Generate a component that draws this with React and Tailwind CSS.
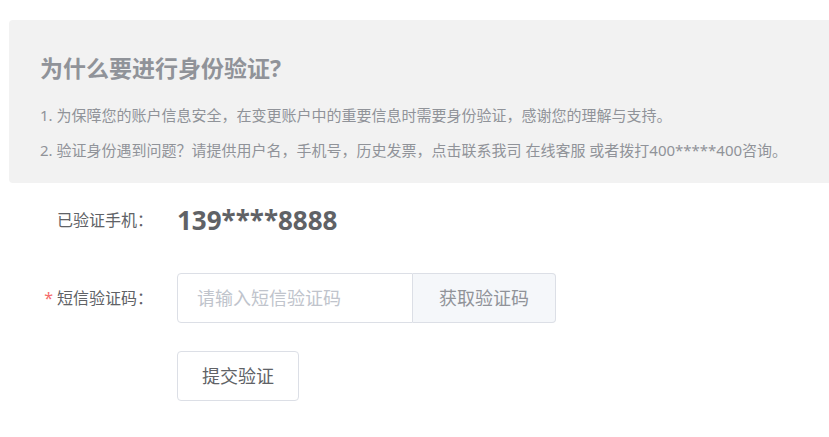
import React, { useState } from 'react';

const font = { fontFamily: '"Noto Sans", "Noto Sans CJK SC", sans-serif' };

const App = () => {
    const [code, setCode] = useState('');

    return (
        <div className="w-full overflow-hidden bg-white pt-[20px] pl-[9px] pb-[36px]" style={font}>
            {/* notice box */}
            <div className="bg-[#f2f2f2] rounded-[4px] mr-[-12px] pl-[31px] pt-[33px] pb-[23px]">
                <h3 className="text-[23px] leading-[30px] font-bold text-[#909399]">为什么要进行身份验证?</h3>
                <p className="mt-[22px] text-[15px] leading-[20px] text-[#909399]">
                    1. 为保障您的账户信息安全，在变更账户中的重要信息时需要身份验证，感谢您的理解与支持。
                </p>
                <p className="mt-[15px] text-[15px] leading-[20px] text-[#909399]">
                    2. 验证身份遇到问题？请提供用户名，手机号，历史发票，点击联系我司 在线客服 或者拨打400*****400咨询。
                </p>
            </div>

            {/* form */}
            <div className="mt-[17px] flex items-center h-[40px]">
                <label className="w-[168px] pr-[24px] text-right text-[16px] text-[#606266]">已验证手机：</label>
                <span className="text-[26px] font-bold text-[#606266] leading-[40px]">139****8888</span>
            </div>

            <div className="mt-[33px] flex items-center">
                <label className="w-[168px] pr-[24px] text-right text-[16px] text-[#606266]">
                    <span className="text-[#f56c6c] mr-[4px]">*</span>短信验证码：
                </label>
                <div className="flex h-[50px]">
                    <input
                        value={code}
                        onChange={(e) => setCode(e.target.value)}
                        placeholder="请输入短信验证码"
                        className="w-[236px] h-full border border-[#dcdfe6] rounded-l-[4px] px-[19px] text-[18px] text-[#606266] placeholder:text-[#c0c4cc] outline-none"
                    />
                    <button className="w-[143px] h-full border border-l-0 border-[#dcdfe6] rounded-r-[4px] bg-[#f5f7fa] text-[18px] text-[#909399]">
                        获取验证码
                    </button>
                </div>
            </div>

            <div className="mt-[28px] pl-[168px]">
                <button className="w-[122px] h-[50px] border border-[#dcdfe6] rounded-[4px] bg-white text-[18px] text-[#606266]">
                    提交验证
                </button>
            </div>
        </div>
    );
};

export default App;
